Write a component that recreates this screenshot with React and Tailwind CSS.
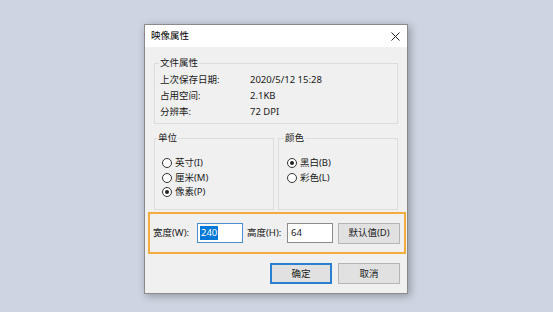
import React from "react";

const font = { fontFamily: '"Noto Sans", "Noto Sans CJK SC", sans-serif' };

function Radio({ checked, label }) {
  return (
    <div className="flex h-[14.5px] items-center gap-[3px] whitespace-nowrap">
      <span className="flex h-[10px] w-[10px] items-center justify-center rounded-full border border-[#333] bg-white">
        {checked && <span className="h-[4px] w-[4px] rounded-full bg-[#222]" />}
      </span>
      <span>{label}</span>
    </div>
  );
}

function Button({ children, primary }) {
  return (
    <div
      className={
        "flex h-[21px] w-[62px] items-center justify-center whitespace-nowrap bg-[#e1e1e1] " +
        (primary ? "border-2 border-[#2b7fd0]" : "border border-[#b4b4b4]")
      }
    >
      {children}
    </div>
  );
}

export default function App() {
  const info = [
    ["上次保存日期:", "2020/5/12 15:28"],
    ["占用空间:", "2.1KB"],
    ["分辨率:", "72 DPI"],
  ];

  return (
    <div
      className="h-[312px] w-[553px] overflow-hidden bg-[#ccd5e1] pl-[144px] pt-[24px] text-[9.5px] leading-[16px] text-[#1a1a1a]"
      style={font}
    >
      <div className="flex h-[270px] w-[264px] flex-col border border-[#8a8a8a] bg-[#f0f0f0] shadow-[2px_2px_8px_rgba(0,0,0,0.3)]">
        {/* title bar */}
        <div className="flex h-[22px] items-center justify-between bg-white pl-[6px] pr-[6px] text-black">
          <span>映像属性</span>
          <svg width="9" height="9" viewBox="0 0 9 9" className="mr-[1px]">
            <path d="M0.5 0.5 L8.5 8.5 M8.5 0.5 L0.5 8.5" stroke="#222" strokeWidth="1" />
          </svg>
        </div>

        {/* file properties */}
        <fieldset className="ml-[9px] mt-[8px] w-[244px] border border-[#dcdcdc] pl-[4px] pb-[3px]">
          <legend className="px-[1px]">文件属性</legend>
          <div className="mt-[1px] pl-px">
            {info.map(([k, v]) => (
              <div key={k} className="flex h-[16px] items-center whitespace-nowrap">
                <span className="w-[90px]">{k}</span>
                <span>{v}</span>
              </div>
            ))}
          </div>
        </fieldset>

        {/* unit / colour */}
        <div className="ml-[9px] mt-[6px] flex gap-[4px]">
          <fieldset className="h-[80px] w-[120px] border border-[#dcdcdc] pl-[2px]">
            <legend className="px-[1px]">单位</legend>
            <div className="mt-[10px] pl-[5px]">
              <Radio label="英寸(I)" />
              <Radio label="厘米(M)" />
              <Radio label="像素(P)" checked />
            </div>
          </fieldset>
          <fieldset className="h-[80px] w-[120px] border border-[#dcdcdc] pl-[5px]">
            <legend className="px-[1px]">颜色</legend>
            <div className="mt-[10px] pl-[3px]">
              <Radio label="黑白(B)" checked />
              <Radio label="彩色(L)" />
            </div>
          </fieldset>
        </div>

        {/* size row */}
        <div className="ml-[3px] mt-[2px] flex h-[42px] w-[258px] items-center whitespace-nowrap border-2 border-[#f2ae3c] pl-[3px]">
          <span className="w-[44px]">宽度(W):</span>
          <div className="flex h-[20px] w-[46px] items-center border border-[#4a8fd6] bg-white pl-[2px]">
            <span className="bg-[#0078d7] px-px leading-[14px] text-white">240</span>
          </div>
          <span className="ml-[4px] w-[40px]">高度(H):</span>
          <div className="flex h-[20px] w-[46px] items-center border border-[#8c8c8c] bg-white pl-[3px]">
            64
          </div>
          <div className="ml-[5px]">
            <Button>默认值(D)</Button>
          </div>
        </div>

        {/* buttons */}
        <div className="mt-[9px] flex justify-end gap-[6px] pr-[7px]">
          <Button primary>确定</Button>
          <Button>取消</Button>
        </div>
      </div>
    </div>
  );
}
